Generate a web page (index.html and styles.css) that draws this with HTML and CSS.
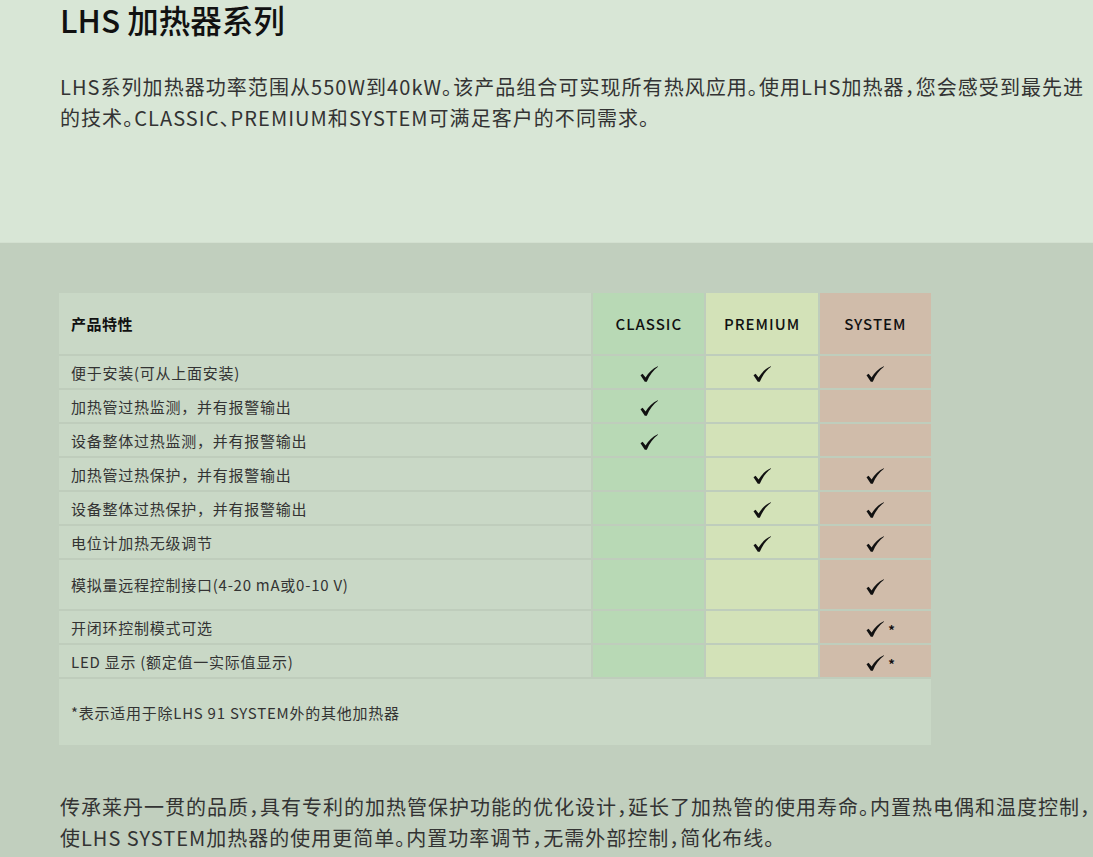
FILE: index.html
```html
<!DOCTYPE html>
<html lang="zh-CN">
<head>
<meta charset="utf-8">
<title>LHS 加热器系列</title>
<link rel="stylesheet" href="styles.css">
</head>
<body>
<section class="intro">
  <h1 class="title">LHS 加热器系列</h1>
  <p class="lead">LHS系列加热器功率范围从550W到40kW。该产品组合可实现所有热风应用。使用LHS加热器，您会感受到最先进的技术。CLASSIC、PREMIUM和SYSTEM可满足客户的不同需求。</p>
</section>
<section class="specs">
  <table class="feat">
    <colgroup>
      <col class="c-name"><col class="c-model"><col class="c-model"><col class="c-model">
    </colgroup>
    <thead>
      <tr class="head">
        <th class="name">产品特性</th>
        <th class="classic">CLASSIC</th>
        <th class="premium">PREMIUM</th>
        <th class="system">SYSTEM</th>
      </tr>
    </thead>
    <tbody>
      <tr>
        <td class="name">便于安装(可从上面安装)</td>
        <td class="classic"><span class="ck"><svg viewBox="0 0 18 16"><path d="M0.5 9.2 L2.6 7.8 L5.6 11.6 C8.5 6.5 12.5 2.5 17.8 0.2 L18 0.8 C13.5 4 9.5 9 6.8 15.8 L4.8 15.8 Z"/></svg></span></td>
        <td class="premium"><span class="ck"><svg viewBox="0 0 18 16"><path d="M0.5 9.2 L2.6 7.8 L5.6 11.6 C8.5 6.5 12.5 2.5 17.8 0.2 L18 0.8 C13.5 4 9.5 9 6.8 15.8 L4.8 15.8 Z"/></svg></span></td>
        <td class="system"><span class="ck"><svg viewBox="0 0 18 16"><path d="M0.5 9.2 L2.6 7.8 L5.6 11.6 C8.5 6.5 12.5 2.5 17.8 0.2 L18 0.8 C13.5 4 9.5 9 6.8 15.8 L4.8 15.8 Z"/></svg></span></td>
      </tr>
      <tr>
        <td class="name">加热管过热监测，并有报警输出</td>
        <td class="classic"><span class="ck"><svg viewBox="0 0 18 16"><path d="M0.5 9.2 L2.6 7.8 L5.6 11.6 C8.5 6.5 12.5 2.5 17.8 0.2 L18 0.8 C13.5 4 9.5 9 6.8 15.8 L4.8 15.8 Z"/></svg></span></td>
        <td class="premium"></td>
        <td class="system"></td>
      </tr>
      <tr>
        <td class="name">设备整体过热监测，并有报警输出</td>
        <td class="classic"><span class="ck"><svg viewBox="0 0 18 16"><path d="M0.5 9.2 L2.6 7.8 L5.6 11.6 C8.5 6.5 12.5 2.5 17.8 0.2 L18 0.8 C13.5 4 9.5 9 6.8 15.8 L4.8 15.8 Z"/></svg></span></td>
        <td class="premium"></td>
        <td class="system"></td>
      </tr>
      <tr>
        <td class="name">加热管过热保护，并有报警输出</td>
        <td class="classic"></td>
        <td class="premium"><span class="ck"><svg viewBox="0 0 18 16"><path d="M0.5 9.2 L2.6 7.8 L5.6 11.6 C8.5 6.5 12.5 2.5 17.8 0.2 L18 0.8 C13.5 4 9.5 9 6.8 15.8 L4.8 15.8 Z"/></svg></span></td>
        <td class="system"><span class="ck"><svg viewBox="0 0 18 16"><path d="M0.5 9.2 L2.6 7.8 L5.6 11.6 C8.5 6.5 12.5 2.5 17.8 0.2 L18 0.8 C13.5 4 9.5 9 6.8 15.8 L4.8 15.8 Z"/></svg></span></td>
      </tr>
      <tr>
        <td class="name">设备整体过热保护，并有报警输出</td>
        <td class="classic"></td>
        <td class="premium"><span class="ck"><svg viewBox="0 0 18 16"><path d="M0.5 9.2 L2.6 7.8 L5.6 11.6 C8.5 6.5 12.5 2.5 17.8 0.2 L18 0.8 C13.5 4 9.5 9 6.8 15.8 L4.8 15.8 Z"/></svg></span></td>
        <td class="system"><span class="ck"><svg viewBox="0 0 18 16"><path d="M0.5 9.2 L2.6 7.8 L5.6 11.6 C8.5 6.5 12.5 2.5 17.8 0.2 L18 0.8 C13.5 4 9.5 9 6.8 15.8 L4.8 15.8 Z"/></svg></span></td>
      </tr>
      <tr>
        <td class="name">电位计加热无级调节</td>
        <td class="classic"></td>
        <td class="premium"><span class="ck"><svg viewBox="0 0 18 16"><path d="M0.5 9.2 L2.6 7.8 L5.6 11.6 C8.5 6.5 12.5 2.5 17.8 0.2 L18 0.8 C13.5 4 9.5 9 6.8 15.8 L4.8 15.8 Z"/></svg></span></td>
        <td class="system"><span class="ck"><svg viewBox="0 0 18 16"><path d="M0.5 9.2 L2.6 7.8 L5.6 11.6 C8.5 6.5 12.5 2.5 17.8 0.2 L18 0.8 C13.5 4 9.5 9 6.8 15.8 L4.8 15.8 Z"/></svg></span></td>
      </tr>
      <tr class="tall">
        <td class="name">模拟量远程控制接口(4-20 mA或0-10 V)</td>
        <td class="classic"></td>
        <td class="premium"></td>
        <td class="system"><span class="ck"><svg viewBox="0 0 18 16"><path d="M0.5 9.2 L2.6 7.8 L5.6 11.6 C8.5 6.5 12.5 2.5 17.8 0.2 L18 0.8 C13.5 4 9.5 9 6.8 15.8 L4.8 15.8 Z"/></svg></span></td>
      </tr>
      <tr>
        <td class="name">开闭环控制模式可选</td>
        <td class="classic"></td>
        <td class="premium"></td>
        <td class="system"><span class="ck"><svg viewBox="0 0 18 16"><path d="M0.5 9.2 L2.6 7.8 L5.6 11.6 C8.5 6.5 12.5 2.5 17.8 0.2 L18 0.8 C13.5 4 9.5 9 6.8 15.8 L4.8 15.8 Z"/></svg><span class="star">*</span></span></td>
      </tr>
      <tr>
        <td class="name">LED 显示 (额定值一实际值显示)</td>
        <td class="classic"></td>
        <td class="premium"></td>
        <td class="system"><span class="ck"><svg viewBox="0 0 18 16"><path d="M0.5 9.2 L2.6 7.8 L5.6 11.6 C8.5 6.5 12.5 2.5 17.8 0.2 L18 0.8 C13.5 4 9.5 9 6.8 15.8 L4.8 15.8 Z"/></svg><span class="star">*</span></span></td>
      </tr>
      <tr class="note">
        <td class="name" colspan="4">*表示适用于除LHS 91 SYSTEM外的其他加热器</td>
      </tr>
    </tbody>
  </table>
  <p class="body-text">传承莱丹一贯的品质，具有专利的加热管保护功能的优化设计，延长了加热管的使用寿命。内置热电偶和温度控制，使LHS SYSTEM加热器的使用更简单。内置功率调节，无需外部控制，简化布线。</p>
</section>
</body>
</html>
```

FILE: styles.css
```css
html, body {
  margin: 0;
  padding: 0;
}

body {
  background: #c1cfbe;
  font-family: "Noto Sans CJK SC", "Noto Sans", sans-serif;
  color: #333;
  overflow: hidden;
}

.intro {
  background: #d8e6d6;
  height: 243px;
  box-sizing: border-box;
  padding-left: 60px;
  border-bottom: 1px solid #d3e0d0;
}

.title {
  margin: 0;
  font-size: 31.5px;
  line-height: 38px;
  font-weight: 500;
  color: #111;
}

.lead {
  margin: 33px 0 0;
  font-size: 20px;
  line-height: 31px;
  letter-spacing: 1.05px;
  font-feature-settings: "halt";
  color: #333;
}

.specs {
  padding-left: 59px;
  padding-top: 50px;
}

.feat {
  border-collapse: separate;
  border-spacing: 0;
  width: 872px;
  table-layout: fixed;
  background: #c9d8c6;
  font-size: 15px;
}

.c-name { width: 531px; }
.c-model { width: 113px; }

.feat th,
.feat td {
  padding: 0;
  border-bottom: 2px solid #bfcdbc;
  height: 32px;
  vertical-align: middle;
  text-align: center;
  color: #333;
  letter-spacing: 0.75px;
}

.feat .name {
  text-align: left;
  padding-left: 12px;
}

.feat .classic,
.feat .premium,
.feat .system {
  border-left: 2px solid #bfcdbc;
}

.feat .classic { background: #b8d9b5; }
.feat .premium { background: #d3e2b8; }
.feat .system { background: #d0bcaa; }

.head th {
  height: 61px;
  font-weight: 500;
  color: #111;
  letter-spacing: 1px;
}

.head th.name {
  font-weight: 700;
  letter-spacing: 0.5px;
}

.tall td { height: 49px; }

.note td {
  height: 66px;
  border-bottom: none;
}

.ck {
  position: relative;
  display: inline-block;
  width: 18px;
  height: 16px;
  vertical-align: middle;
  line-height: 0;
}

.ck svg {
  width: 18px;
  height: 16px;
  fill: #111;
}

.star {
  position: absolute;
  left: 22px;
  top: 2px;
  font-size: 13px;
  line-height: 13px;
  color: #111;
  font-weight: 700;
}

.body-text {
  margin: 46px 0 0;
  padding-left: 1px;
  font-size: 20px;
  line-height: 31px;
  letter-spacing: 1px;
  font-feature-settings: "halt";
  color: #333;
}
```
